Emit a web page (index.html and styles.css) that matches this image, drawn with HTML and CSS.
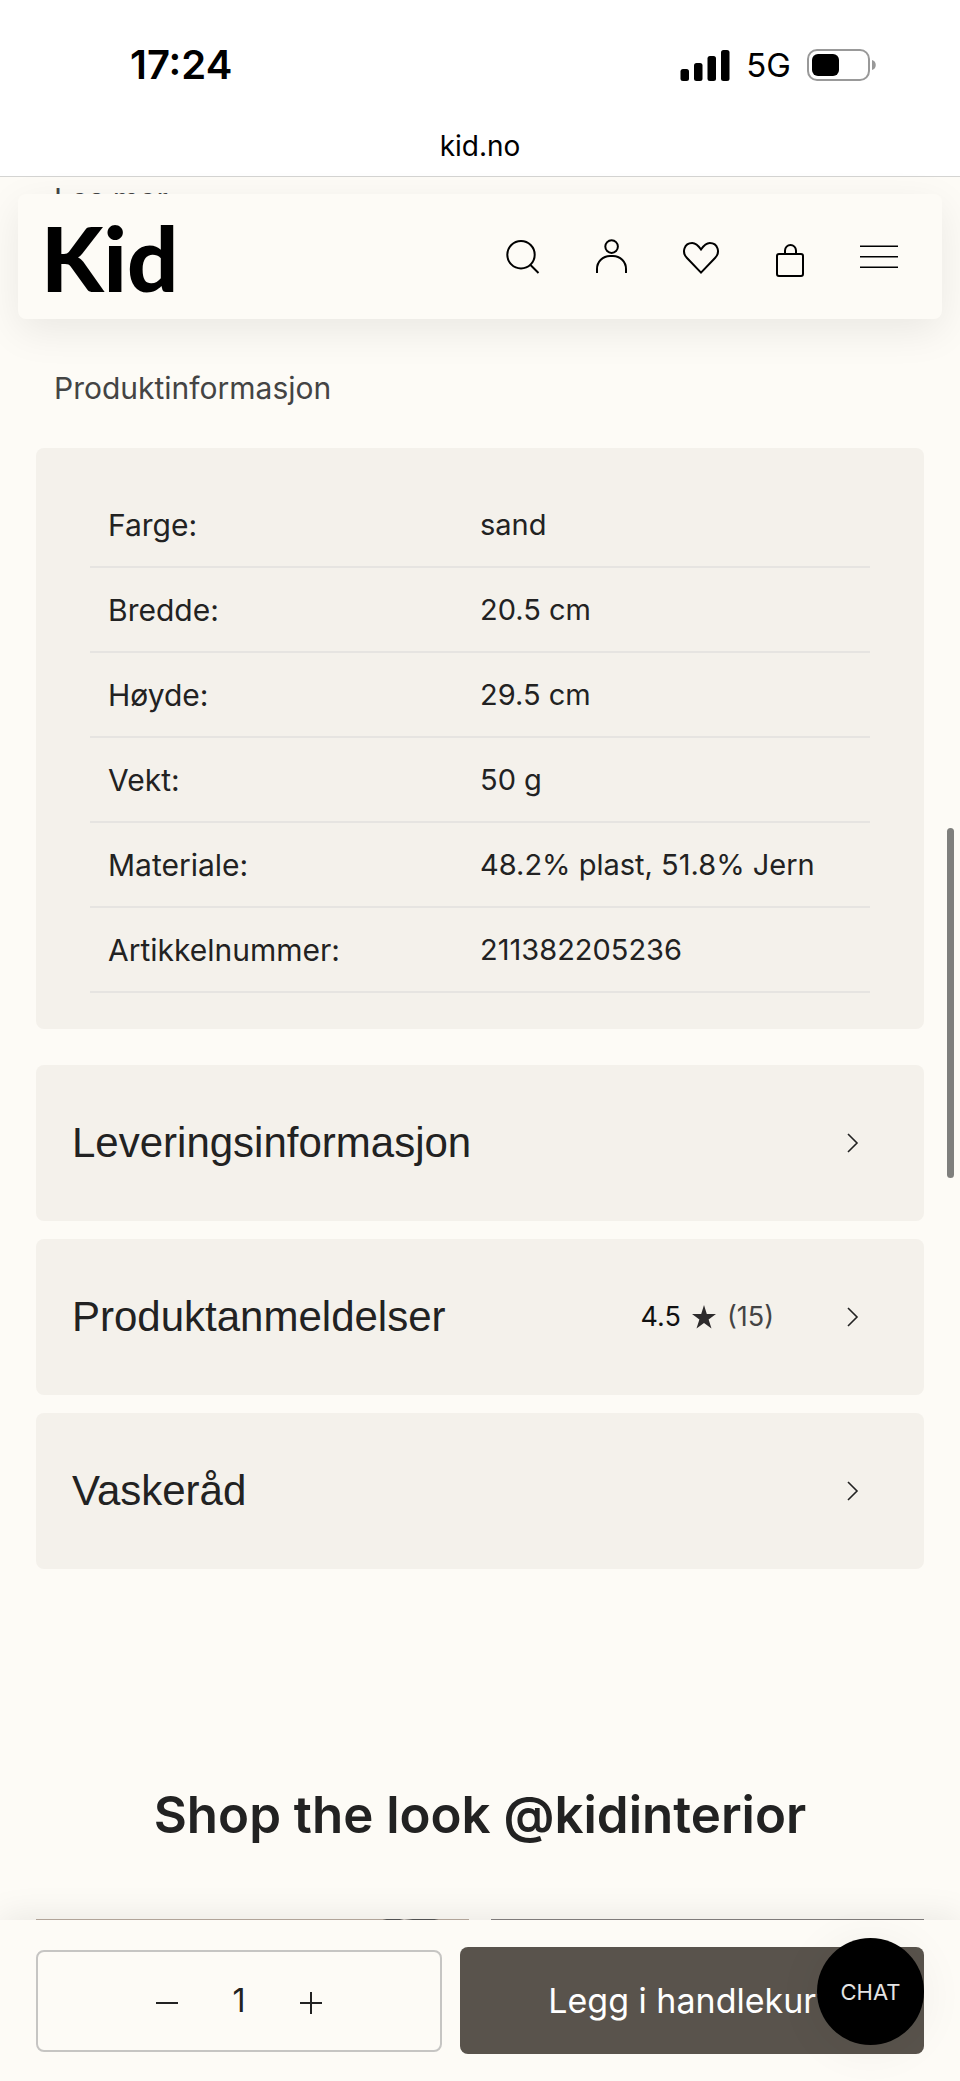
FILE: index.html
```html
<!DOCTYPE html>
<html lang="no">
<head>
    <meta charset="UTF-8">
    <meta name="viewport" content="width=device-width, initial-scale=1.0">
    <title>Kid Interiør</title>
    <link rel="stylesheet" href="styles.css">
</head>
<body>
    <div class="browser-bar">
        <div class="status">
            <span class="time">17:24</span>
            <div class="status-icons">
                <svg width="50" height="32" viewBox="0 0 50 32" aria-hidden="true">
                    <rect x="0.5" y="20" width="8.5" height="12" rx="2.5"/>
                    <rect x="14" y="14" width="8.5" height="18" rx="2.5"/>
                    <rect x="27.5" y="7" width="8.5" height="25" rx="2.5"/>
                    <rect x="41" y="1" width="8.5" height="31" rx="2.5"/>
                </svg>
                <span class="network">5G</span>
                <svg width="70" height="32" viewBox="0 0 70 32" aria-hidden="true">
                    <rect x="1" y="1" width="61" height="30" rx="9" fill="none" stroke="#999" stroke-width="2"/>
                    <rect x="5" y="5" width="27" height="22" rx="6"/>
                    <path d="M65 11c5 1 5 9 0 10z" fill="#999"/>
                </svg>
            </div>
        </div>
        <div class="address">kid.no</div>
    </div>

    <div class="page">
        <header class="site-header">
            <a class="logo" href="#">Kid</a>
            <nav class="header-nav">
                <button class="icon-btn" aria-label="Søk">
                    <svg class="icon" viewBox="0 0 40 40"><circle cx="18" cy="17.7" r="13.7"/><path d="M27.5 28l8 8"/></svg>
                </button>
                <button class="icon-btn" aria-label="Min side">
                    <svg class="icon" viewBox="0 0 40 40"><circle cx="19.6" cy="9.6" r="6.3"/><path d="M5 36v-4a13 13 0 0 1 13-13h3a13 13 0 0 1 13 13v4"/></svg>
                </button>
                <button class="icon-btn" aria-label="Favoritter">
                    <svg class="icon" viewBox="0 0 40 40"><path d="M20 35.6L6 21C.5 15.5 3 6 11.2 6c4 0 6.3 2.8 8.8 6.5C22.5 8.8 25 6 28.8 6 37 6 39.5 15.5 34 21z"/></svg>
                </button>
                <button class="icon-btn" aria-label="Handlekurv">
                    <svg class="icon" viewBox="0 0 40 40"><rect x="7" y="17" width="26" height="22" rx="2"/><path d="M15 17v-3.5a5.5 5.5 0 0 1 11 0V17"/></svg>
                </button>
                <button class="icon-btn" aria-label="Meny">
                    <svg class="icon icon-thin" viewBox="0 0 40 40"><path d="M1 9.3h38M1 19.8h38M1 30.3h38"/></svg>
                </button>
            </nav>
        </header>

        <main class="content">
            <a class="read-more" href="#">Les mer</a>
            <h2 class="label">Produktinformasjon</h2>

            <div class="card">
                <table class="specs">
                    <tr><th scope="row">Farge:</th><td>sand</td></tr>
                    <tr><th scope="row">Bredde:</th><td>20.5 cm</td></tr>
                    <tr><th scope="row">Høyde:</th><td>29.5 cm</td></tr>
                    <tr><th scope="row">Vekt:</th><td>50 g</td></tr>
                    <tr><th scope="row">Materiale:</th><td>48.2% plast, 51.8% Jern</td></tr>
                    <tr><th scope="row">Artikkelnummer:</th><td>211382205236</td></tr>
                </table>
            </div>

            <div class="accordions">
                <button class="accordion">
                    <span class="accordion-title">Leveringsinformasjon</span>
                    <svg class="chevron" viewBox="0 0 12 20"><path d="M1 1l9 9-9 9"/></svg>
                </button>
                <button class="accordion">
                    <span class="accordion-title">Produktanmeldelser</span>
                    <span class="rating">
                        <span class="score">4.5</span>
                        <svg class="star" viewBox="0 0 24 24"><path d="M12 0l2.8 9H24l-7.4 5.4L19.500 23.500 12 18l-7.500 5.500 2.900-9.100L0 9h9.200z"/></svg>
                        <span class="count">(15)</span>
                    </span>
                    <svg class="chevron" viewBox="0 0 12 20"><path d="M1 1l9 9-9 9"/></svg>
                </button>
                <button class="accordion">
                    <span class="accordion-title">Vaskeråd</span>
                    <svg class="chevron" viewBox="0 0 12 20"><path d="M1 1l9 9-9 9"/></svg>
                </button>
            </div>

            <h2 class="look-title">Shop the look @kidinterior</h2>
            <div class="look-grid">
                <div class="look look-left"></div>
                <div class="look look-right"></div>
            </div>
        </main>

        <div class="buy-bar">
            <div class="stepper">
                <button class="step" aria-label="Færre">
                    <svg viewBox="0 0 24 24"><path d="M1 12h22"/></svg>
                </button>
                <input class="quantity" type="text" value="1" aria-label="Antall">
                <button class="step" aria-label="Flere">
                    <svg viewBox="0 0 24 24"><path d="M1 12h22M12 1v22"/></svg>
                </button>
            </div>
            <button class="add-btn">Legg i handlekurv</button>
            <button class="chat">CHAT</button>
        </div>
    </div>
    <div class="scroll-thumb"></div>
</body>
</html>
```

FILE: styles.css
```css
* {
    box-sizing: border-box;
}
body {
    margin: 0;
    min-height: 100vh;
    display: flex;
    flex-direction: column;
    position: relative;
    background: #fdfbf6;
    color: #222;
    font-family: Inter, "Liberation Sans", sans-serif;
    font-size: 30px;
    line-height: 36px;
}
button, input {
    font: inherit;
    color: inherit;
    background: none;
    border: none;
    padding: 0;
    margin: 0;
}
button {
    cursor: pointer;
}
h2 {
    margin: 0;
}
a {
    color: inherit;
    text-decoration: none;
}

/* Browser */
.browser-bar {
    background: #fff;
    color: #000;
    border-bottom: 1px solid #d4d4d2;
    padding: 41px 83px 12px 130px;
}
.status {
    display: flex;
    justify-content: space-between;
    align-items: center;
    height: 48px;
}
.time {
    font-size: 40px;
    font-weight: 600;
}
.status-icons {
    display: flex;
    align-items: center;
    gap: 16px;
}
.network {
    font-size: 33px;
}
.address {
    margin: 39px -83px 0 -130px;
    text-align: center;
    font-size: 28px;
}

/* Header */
.page {
    position: relative;
    flex: 1;
    display: flex;
    flex-direction: column;
}
.site-header {
    position: absolute;
    top: 17px;
    left: 18px;
    right: 18px;
    z-index: 2;
    display: flex;
    justify-content: space-between;
    align-items: center;
    height: 125px;
    padding: 0 19px 0 23px;
    background: #fdfbf6;
    border-radius: 8px;
    box-shadow: 0 12px 40px rgba(0, 0, 0, 0.08);
}
.logo {
    font-family: Lato, sans-serif;
    font-size: 90px;
    line-height: 96px;
    font-weight: 900;
    color: #000;
}
.header-nav {
    display: flex;
}
.icon-btn {
    width: 89px;
    height: 89px;
    display: flex;
    justify-content: center;
    align-items: center;
}
.icon {
    width: 40px;
    height: 40px;
    fill: none;
    stroke: #000;
    stroke-width: 2;
}
.icon-thin {
    stroke-width: 1.6;
}

/* Content */
.content {
    flex: 1;
    display: flex;
    flex-direction: column;
    padding: 4px 36px 0;
}
.read-more,
.label {
    padding-left: 18px;
    color: #444;
    font-size: 30px;
    font-weight: 400;
}
.label {
    margin: 153px 0 42px;
}
.card {
    padding: 35px 54px 36px;
    background: #f4f1eb;
    border-radius: 8px;
}
.specs {
    width: 100%;
    table-layout: fixed;
    border-spacing: 0;
}
.specs th,
.specs td {
    height: 85px;
    padding: 0 0 0 18px;
    border-bottom: 2px solid #e6e4e1;
    text-align: left;
    font-weight: 400;
}
.specs td {
    padding-left: 0;
    font-size: 29px;
}
.accordions {
    display: flex;
    flex-direction: column;
    gap: 18px;
    margin-top: 36px;
}
.accordion {
    display: flex;
    align-items: center;
    height: 156px;
    padding: 0 65px 0 36px;
    background: #f4f1eb;
    border-radius: 8px;
    text-align: left;
}
.accordion-title {
    flex: 1;
    font-family: "Liberation Sans", sans-serif;
    font-size: 42px;
    line-height: 52px;
}
.rating {
    display: flex;
    align-items: center;
    gap: 11px;
    margin-right: 73px;
    font-size: 27px;
}
.score {
    color: #111;
}
.star {
    width: 24px;
    height: 24px;
    fill: #2d2b2c;
}
.count {
    color: #444;
}
.chevron {
    width: 12px;
    height: 20px;
    fill: none;
    stroke: #222;
    stroke-width: 1.6;
}
.look-title {
    margin: 214px 0 72px;
    text-align: center;
    font-size: 51px;
    line-height: 64px;
    font-weight: 600;
}
.look-grid {
    flex: 1;
    min-height: 1px;
    display: grid;
    grid-template-columns: 1fr 1fr;
    gap: 22px;
}
.look-left {
    background: linear-gradient(90deg, #b9aca0 80%, #555 81%, #555 84%, #d8d0c8 85%, #555 87%, #555 92%, #b9aca0 93%);
}
.look-right {
    background: #858180;
}

/* Buy bar */
.buy-bar {
    position: relative;
    display: grid;
    grid-template-columns: 7fr 8fr;
    align-items: center;
    gap: 18px;
    padding: 27px 36px;
    background: #fdfbf6;
    box-shadow: 0 -4px 32px rgba(0, 0, 0, 0.08);
}
.stepper {
    display: flex;
    justify-content: center;
    align-items: center;
    gap: 24px;
    height: 102px;
    border: 2px solid #c6c5c3;
    border-radius: 8px;
}
.step {
    width: 24px;
    height: 28px;
    padding-top: 4px;
}
.step svg {
    display: block;
    fill: none;
    stroke: #222;
    stroke-width: 2;
}
.quantity {
    width: 72px;
    text-align: center;
    font-size: 32px;
}
.add-btn {
    height: 107px;
    background: #59534c;
    color: #fff;
    border-radius: 8px;
    font-size: 34px;
}
.chat {
    position: absolute;
    top: 18px;
    right: 36px;
    width: 107px;
    height: 107px;
    border-radius: 50%;
    background: #000;
    color: #e4e4e4;
    font-size: 22px;
    box-shadow: 0 4px 48px rgba(0, 0, 0, 0.06);
}

/* Scroll position */
.scroll-thumb {
    position: absolute;
    top: 828px;
    right: 6px;
    width: 7px;
    height: 350px;
    border-radius: 4px;
    background: #7f7f7d;
}
```
